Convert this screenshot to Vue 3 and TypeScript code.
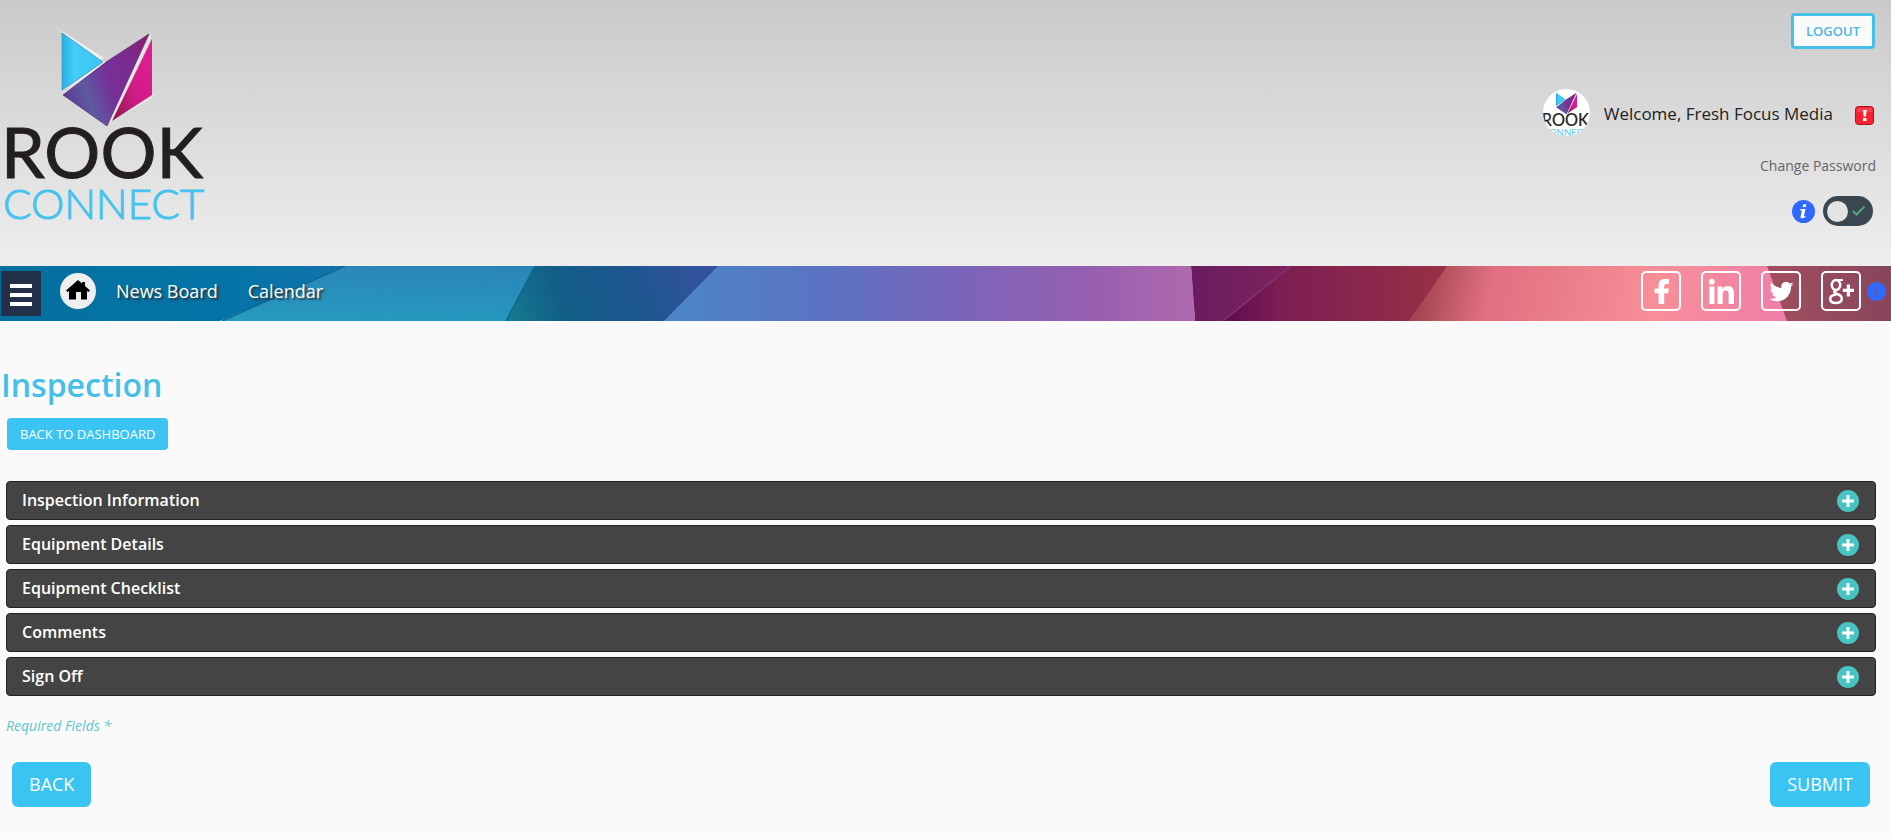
<script setup lang="ts">
import { ref } from 'vue'

interface Section {
  id: string
  title: string
  open: boolean
}

const tilesEnabled = ref(false)

const sections = ref<Section[]>([
  { id: 'information', title: 'Inspection Information', open: false },
  { id: 'details', title: 'Equipment Details', open: false },
  { id: 'checklist', title: 'Equipment Checklist', open: false },
  { id: 'comments', title: 'Comments', open: false },
  { id: 'signoff', title: 'Sign Off', open: false },
])
</script>

<template>
  <div class="page">
    <header class="top">
      <a href="#" class="logo" aria-label="Rook Connect">
        <svg width="212" height="230" viewBox="0 0 212 230">
          <defs>
            <linearGradient id="lg-cyan" x1="0" y1="0" x2="1" y2="0">
              <stop offset="0" stop-color="#2bb0e4" />
              <stop offset=".3" stop-color="#43cdf8" />
              <stop offset="1" stop-color="#3cc4f2" />
            </linearGradient>
            <linearGradient id="lg-purple" x1="0" y1=".6" x2="1" y2=".2">
              <stop offset="0" stop-color="#5a3f96" />
              <stop offset=".22" stop-color="#5e5aa2" />
              <stop offset=".5" stop-color="#762f98" />
              <stop offset=".8" stop-color="#7b2b8c" />
              <stop offset="1" stop-color="#8a1f70" />
            </linearGradient>
            <linearGradient id="lg-pink" x1="0" y1="1" x2="1" y2=".2">
              <stop offset="0" stop-color="#8a1748" />
              <stop offset=".5" stop-color="#cf1c84" />
              <stop offset="1" stop-color="#e21b94" />
            </linearGradient>
            <linearGradient id="lg-flare" x1="0" y1="1" x2="1" y2="0">
              <stop offset="0" stop-color="#fff" />
              <stop offset="1" stop-color="#fff" stop-opacity="0" />
            </linearGradient>
            <symbol id="brand" viewBox="0 0 212 230">
              <path d="M54 26 104 58 100 60z" fill="#f4f8fa" opacity=".85" />
              <path d="M62 93 104 61 106 63z" fill="#f4f8fa" />
              <path d="M151 32 151 38 112 122 108 122z" fill="#e8e4e8" />
              <path d="M112 121 168 84 150 99z" fill="url(#lg-flare)" />
              <path d="M62 33 62 90 103 62z" fill="url(#lg-cyan)" stroke="#2789b5" stroke-width=".6" />
              <path d="M63 95 106 62 149 34 107 126z" fill="url(#lg-purple)" stroke="#50246c" stroke-width=".6" />
              <path d="M152 39 152 95 112 121z" fill="url(#lg-pink)" />
              <text x="1" y="178" class="rook">ROOK</text>
              <text x="3" y="219" class="connect">CONNECT</text>
            </symbol>
          </defs>
          <use href="#brand" />
        </svg>
      </a>

      <div class="account">
        <button type="button" class="logout">LOGOUT</button>
        <div class="welcome">
          <svg class="avatar" width="47" height="47" viewBox="6 17 202 202" aria-hidden="true">
            <use href="#brand" width="212" height="230" />
          </svg>
          <span class="greeting">Welcome, Fresh Focus Media</span>
          <button type="button" class="alert" aria-label="Alerts">
            <svg width="19" height="19" viewBox="0 0 19 19">
              <rect x=".5" y=".5" width="18" height="18" rx="3" fill="#f7212f" stroke="#a8141c" />
              <path d="M2 2h15v4H2z" fill="#ff5560" opacity=".6" />
              <path d="M8 4h3.600l-.6 6.500h-2.400zM8 12h3.500v3H8z" fill="#fff" />
            </svg>
          </button>
        </div>
        <a href="#" class="password">Change Password</a>
        <div class="settings">
          <a href="#" class="icon-link" aria-label="Tile help">
            <svg width="23" height="23" viewBox="0 0 23 23">
              <circle cx="11.500" cy="11.500" r="11.500" fill="#2f69ff" />
              <path d="M11.300 4.300h3l-.6 2.800h-3zM8.500 9h5l-1.700 7.600 1.800-.7v.9c-1.200 1-2.400 1.500-3.500 1.500-1.200 0-1.800-.6-1.500-1.900l1.300-5.600-1.700-.5z" fill="#fff" />
            </svg>
          </a>
          <label class="switch">
            <input v-model="tilesEnabled" type="checkbox" aria-label="Enable tiles" />
            <span class="track">
              <span class="knob"></span>
              <svg width="14" height="12" viewBox="0 0 14 12"><path d="M1 6 4.500 9.500 12.500 1.500" fill="none" stroke="#4fa878" stroke-width="2" /></svg>
            </span>
          </label>
        </div>
      </div>
    </header>

    <nav class="bar" aria-label="Main">
      <svg class="art" viewBox="0 0 1891 55" preserveAspectRatio="none" aria-hidden="true">
        <defs>
          <linearGradient id="b1"><stop offset="0" stop-color="#04709f" /><stop offset=".65" stop-color="#0474a6" /><stop offset="1" stop-color="#1473ad" /></linearGradient>
          <linearGradient id="b2" x1=".3" y1="1" x2=".5" y2="0"><stop offset="0" stop-color="#269abf" /><stop offset="1" stop-color="#2a86b9" /></linearGradient>
          <linearGradient id="b3" gradientUnits="userSpaceOnUse" x1="514" y1="50" x2="690" y2="-10"><stop offset="0" stop-color="#14788e" /><stop offset=".25" stop-color="#125f88" /><stop offset=".65" stop-color="#1d568f" /><stop offset="1" stop-color="#31539c" /></linearGradient>
          <linearGradient id="b4"><stop offset="0" stop-color="#4b87c6" /><stop offset=".3" stop-color="#5a73c2" /><stop offset=".55" stop-color="#7a65ba" /><stop offset=".8" stop-color="#965fb0" /><stop offset="1" stop-color="#b069ad" /></linearGradient>
          <linearGradient id="b5"><stop offset="0" stop-color="#691c60" /><stop offset="1" stop-color="#7d245c" /></linearGradient>
          <linearGradient id="b6"><stop offset="0" stop-color="#5c0c50" /><stop offset=".25" stop-color="#7c1e53" /><stop offset="1" stop-color="#983144" /></linearGradient>
          <linearGradient id="b7" gradientUnits="userSpaceOnUse" x1="1425" y1="22" x2="1790" y2="110"><stop offset="0" stop-color="#a84555" /><stop offset=".06" stop-color="#bb5762" /><stop offset=".17" stop-color="#e17080" /><stop offset=".6" stop-color="#f78f98" /><stop offset="1" stop-color="#ee7cac" /></linearGradient>
          <linearGradient id="b8"><stop offset="0" stop-color="#a34e60" /><stop offset="1" stop-color="#87465b" /></linearGradient>
        </defs>
        <path d="M0 0h350L220 55H0z" fill="url(#b1)" />
        <path d="M345 0h191L507 55H222z" fill="url(#b2)" />
        <path d="M535 0h195L680 55H506z" fill="url(#b3)" />
        <path d="M718 0h473l4 55H664z" fill="url(#b4)" />
        <path d="M1191 0h101l-68 55h-29z" fill="url(#b5)" />
        <path d="M1291 0h158l-38 55h-188z" fill="url(#b6)" />
        <path d="M1447 0h322l20 55h-380z" fill="url(#b7)" />
        <path d="M1767 0h124v55h-104z" fill="url(#b8)" />
        <path d="M345 0 222 55M535 0 506 55" stroke="#0f6790" stroke-width="1.500" />
        <path d="M1291 0 1223 55" stroke="#8a3072" stroke-width="1.500" />
      </svg>

      <button type="button" class="menu" aria-label="Menu">
        <span></span><span></span><span></span>
      </button>
      <a href="#" class="home" aria-label="Home">
        <svg width="24" height="20" viewBox="0 0 24 20">
          <path d="M12 0 16 3.500V2h3v4L24 10.500 22.500 12 21 11v8.500h-6V12H10v7.500H3V11l-1.500 1L0 10.500z" fill="#000" />
        </svg>
      </a>
      <a href="#" class="nav-link">News Board</a>
      <a href="#" class="nav-link">Calendar</a>

      <div class="social">
        <a href="#" aria-label="Facebook">
          <svg viewBox="0 0 40 40"><path d="M28 8.200v4.700h-2.600c-1.700 0-2.200.8-2.200 2.200v2.500h4.600l-.6 4.700h-4V33h-5.600V22.300h-4v-4.700h4v-3.400c0-4 2.300-6.200 6.100-6.200 1.800 0 3.200.1 4.300.2z" /></svg>
        </a>
        <a href="#" aria-label="LinkedIn">
          <svg viewBox="0 0 40 40"><circle cx="10.800" cy="10.700" r="2.900" /><path d="M8.300 15.500h5.200V33H8.300zM16.500 15.500h5v2.400c.9-1.600 2.800-2.800 5.200-2.800 5 0 6.300 3.200 6.300 7.800V33h-5.400v-9c0-2.200-.2-4.500-2.800-4.500-2.700 0-3.100 2.100-3.100 4.300V33h-5.200z" /></svg>
        </a>
        <a href="#" aria-label="Twitter">
          <svg viewBox="0 0 40 40"><path transform="translate(8.500 8.500)" d="M24 4.600a10 10 0 0 1-2.800.8 4.900 4.900 0 0 0 2.200-2.700 10 10 0 0 1-3.100 1.200 4.900 4.900 0 0 0-8.400 4.500A14 14 0 0 1 1.700 3.100a4.900 4.900 0 0 0 1.500 6.600 4.900 4.900 0 0 1-2.200-.6v.1a4.900 4.900 0 0 0 3.900 4.800 5 5 0 0 1-2.200.1 4.900 4.900 0 0 0 4.600 3.400A9.900 9.900 0 0 1 0 19.500a14 14 0 0 0 7.500 2.200c9.100 0 14-7.500 14-14v-.6A10 10 0 0 0 24 4.600z" /></svg>
        </a>
        <a href="#" aria-label="Google Plus">
          <svg viewBox="0 0 40 40">
            <g fill="none" stroke="#fff">
              <ellipse cx="15" cy="14" rx="4.200" ry="5" stroke-width="2.600" />
              <path d="M15 9h7" stroke-width="2" />
              <path d="M16 19c-4 1-3.300 3 0 4 3.200 1 4.800 2.200 4.800 4.600 0 2.800-2.400 4.400-5.900 4.400-3.600 0-5.700-1.600-5.700-4 0-2.600 2.200-4.200 6-4.600" stroke-width="2.500" />
            </g>
            <path d="M25.800 13.500h3.200v4.300h4v3.200h-4v4.500h-3.200V21h-4v-3.200h4z" />
          </svg>
        </a>
      </div>
      <a href="#" class="icon-link nav-info" aria-label="Social help">
        <svg width="19" height="19" viewBox="0 0 19 19">
          <circle cx="9.500" cy="9.500" r="9.500" fill="#2f69ff" />
          <path d="M9 4.500h2.500L11 6.500H8.500zM7.500 8h3.500l-1.200 5.500h-2.500z" fill="#5560b0" />
        </svg>
      </a>
    </nav>

    <main class="content">
      <h1>Inspection</h1>
      <button type="button" class="btn small">BACK TO DASHBOARD</button>

      <div class="sections">
        <h2 v-for="section in sections" :key="section.id">
          <button type="button" class="section" :aria-expanded="section.open" @click="section.open = !section.open">
            <span class="title">{{ section.title }}</span>
            <svg width="22" height="22" viewBox="0 0 22 22" aria-hidden="true">
              <circle cx="11" cy="11" r="11" fill="#46c4c2" />
              <path d="M5 9.500h12v3H5z" fill="#fff" />
              <path v-if="!section.open" d="M9.500 5h3v12h-3z" fill="#fff" />
            </svg>
          </button>
        </h2>
      </div>

      <p class="required">Required Fields *</p>
      <div class="actions">
        <button type="button" class="btn large">BACK</button>
        <button type="submit" class="btn large">SUBMIT</button>
      </div>
    </main>
  </div>
</template>

<style>
body {
  margin: 0;
  background: #fafafa;
}
</style>

<style scoped>
.page {
  font-family: "Open Sans", "Noto Sans", sans-serif;
  font-size: 14px;
  color: #222;
}

button {
  font-family: inherit;
  margin: 0;
  cursor: pointer;
}

a {
  text-decoration: none;
}

svg {
  display: block;
}

.top {
  display: flex;
  justify-content: space-between;
  align-items: flex-start;
  padding: 0 15px 36px 0;
  background: linear-gradient(#cacaca, #eeeeee);
}

.rook {
  font-family: Lato, sans-serif;
  font-size: 70px;
  fill: #231f20;
  stroke: #231f20;
  stroke-width: 1px;
}

.connect {
  font-family: Lato, sans-serif;
  font-size: 42px;
  font-weight: 300;
  fill: #43c3ee;
  stroke: #43c3ee;
  stroke-width: 1px;
}

.account {
  display: flex;
  flex-direction: column;
  align-items: flex-end;
  padding-top: 13px;
}

.logout {
  height: 36px;
  padding: 0 12px;
  margin-right: 1px;
  border: 3px solid #46c0e6;
  border-radius: 4px;
  background: #fafafa;
  color: #4bb8e2;
  font-size: 13px;
  font-weight: 600;
}

.welcome {
  display: flex;
  align-items: center;
  margin: 40px 2px 0 0;
}

.avatar {
  border-radius: 50%;
  background: #fff;
}

.greeting {
  margin: 0 22px 0 14px;
  padding-top: 2px;
  font-size: 17px;
  line-height: 24px;
}

.alert {
  padding: 6px 0 0;
  border: 0;
  background: none;
}

.password {
  margin-top: 20px;
  line-height: 20px;
  color: #666;
}

.settings {
  display: flex;
  align-items: center;
  gap: 8px;
  margin: 20px 3px 0 0;
}

.switch {
  display: block;
  position: relative;
  cursor: pointer;
}

.switch input {
  position: absolute;
  inset: 0;
  margin: 0;
  opacity: 0;
}

.track {
  display: flex;
  align-items: center;
  justify-content: space-between;
  box-sizing: border-box;
  width: 50px;
  height: 30px;
  padding: 0 7px 0 4px;
  border-radius: 15px;
  background: #3b4750;
}

.switch input:checked + .track {
  flex-direction: row-reverse;
}

.knob {
  width: 21px;
  height: 21px;
  border-radius: 50%;
  background: #e3e3e3;
}

.bar {
  position: relative;
  display: flex;
  align-items: flex-start;
  padding: 5px 5px 5px 1px;
}

.art {
  position: absolute;
  inset: 0;
  width: 100%;
  height: 100%;
  z-index: -1;
}

.menu {
  display: flex;
  flex-direction: column;
  align-items: center;
  justify-content: center;
  gap: 5px;
  width: 40px;
  height: 45px;
  padding: 3px 0 0;
  border: 0;
  background: #22304a;
}

.menu span {
  width: 22px;
  height: 4px;
  background: #fff;
}

.home {
  display: flex;
  align-items: center;
  justify-content: center;
  width: 36px;
  height: 36px;
  margin: 2px 2px 0 19px;
  border-radius: 50%;
  background: #efefef;
}

.home svg {
  margin-bottom: 2px;
}

.nav-link {
  margin-left: 18px;
  padding-right: 12px;
  font-size: 18px;
  line-height: 40px;
  color: #fff;
  text-shadow: 2px 2px 2px #333;
}

.social {
  display: flex;
  gap: 20px;
  margin-left: auto;
}

.social a {
  box-sizing: border-box;
  width: 40px;
  height: 40px;
  border: 2px solid #fff;
  border-radius: 5px;
}

.social svg {
  width: 40px;
  height: 40px;
  margin: -2px;
  fill: #fff;
}

.nav-info {
  margin: 11px 0 0 6px;
}

.content {
  padding: 40px 15px 32px 6px;
}

h1 {
  margin: 0 0 0 -5px;
  font-size: 32px;
  font-weight: 600;
  line-height: 48px;
  color: #46bfe8;
}

.btn {
  display: block;
  border: 0;
  background: #3ac4f2;
  color: #fff;
}

.small {
  height: 32px;
  margin: 9px 0 0 1px;
  padding: 0 13px;
  border-radius: 4px;
  font-size: 13px;
}

.sections {
  display: flex;
  flex-direction: column;
  gap: 5px;
  margin-top: 31px;
}

h2 {
  margin: 0;
}

.section {
  display: flex;
  align-items: center;
  justify-content: space-between;
  box-sizing: border-box;
  width: 100%;
  height: 39px;
  padding: 0 16px 0 15px;
  border: 1px solid #222;
  border-radius: 4px;
  background: #444;
  color: #fff;
  font-size: 16px;
  font-weight: 600;
}

.title {
  padding-bottom: 2px;
}

.required {
  margin: 20px 0 26px;
  line-height: 20px;
  font-style: italic;
  color: #5bc6cb;
}

.actions {
  display: flex;
  justify-content: space-between;
  padding: 0 6px;
}

.large {
  height: 45px;
  padding: 0 17px 2px;
  border-radius: 6px;
  font-size: 18px;
}
</style>
